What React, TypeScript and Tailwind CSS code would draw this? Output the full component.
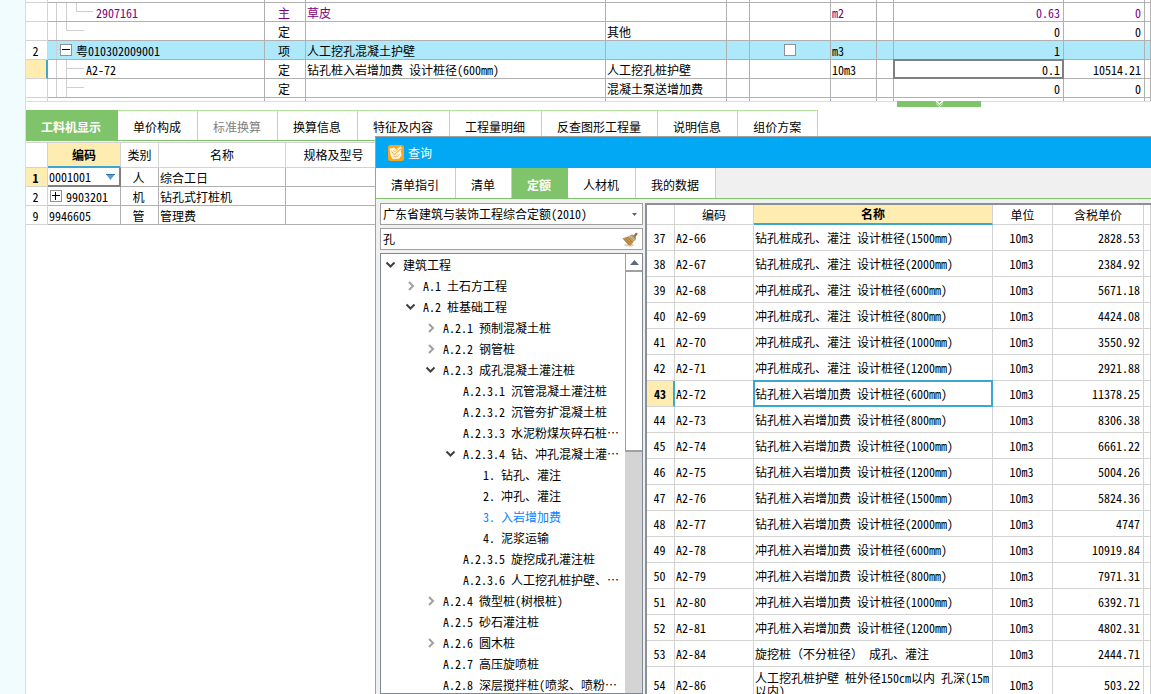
import { useState } from "react";
import { clsx } from "clsx";

type Align = "left" | "center" | "right";

const alignClass: Record<Align, string> = {
  left: "text-left",
  center: "text-center",
  right: "text-right",
};

const bottomTabs = [
  "工料机显示",
  "单价构成",
  "标准换算",
  "换算信息",
  "特征及内容",
  "工程量明细",
  "反查图形工程量",
  "说明信息",
  "组价方案",
];

const queryTabs = ["清单指引", "清单", "定额", "人材机", "我的数据"];

type TreeNode = { level: number; label: string; state?: "open" | "closed" };

const tree: TreeNode[] = [
  { level: 0, label: "建筑工程", state: "open" },
  { level: 1, label: "A.1 土石方工程", state: "closed" },
  { level: 1, label: "A.2 桩基础工程", state: "open" },
  { level: 2, label: "A.2.1 预制混凝土桩", state: "closed" },
  { level: 2, label: "A.2.2 钢管桩", state: "closed" },
  { level: 2, label: "A.2.3 成孔混凝土灌注桩", state: "open" },
  { level: 3, label: "A.2.3.1 沉管混凝土灌注桩" },
  { level: 3, label: "A.2.3.2 沉管夯扩混凝土桩" },
  { level: 3, label: "A.2.3.3 水泥粉煤灰碎石桩…" },
  { level: 3, label: "A.2.3.4 钻、冲孔混凝土灌…", state: "open" },
  { level: 4, label: "1. 钻孔、灌注" },
  { level: 4, label: "2. 冲孔、灌注" },
  { level: 4, label: "3. 入岩增加费" },
  { level: 4, label: "4. 泥浆运输" },
  { level: 3, label: "A.2.3.5 旋挖成孔灌注桩" },
  { level: 3, label: "A.2.3.6 人工挖孔桩护壁、…" },
  { level: 2, label: "A.2.4 微型桩(树根桩)", state: "closed" },
  { level: 2, label: "A.2.5 砂石灌注桩" },
  { level: 2, label: "A.2.6 圆木桩", state: "closed" },
  { level: 2, label: "A.2.7 高压旋喷桩" },
  { level: 2, label: "A.2.8 深层搅拌桩(喷浆、喷粉…" },
];

const indent = ["pl-1", "pl-6", "pl-11", "pl-16", "pl-21"];

const quotas: [number, string, string, string][] = [
  [37, "A2-66", "钻孔桩成孔、灌注 设计桩径(1500mm)", "2828.53"],
  [38, "A2-67", "钻孔桩成孔、灌注 设计桩径(2000mm)", "2384.92"],
  [39, "A2-68", "冲孔桩成孔、灌注 设计桩径(600mm)", "5671.18"],
  [40, "A2-69", "冲孔桩成孔、灌注 设计桩径(800mm)", "4424.08"],
  [41, "A2-70", "冲孔桩成孔、灌注 设计桩径(1000mm)", "3550.92"],
  [42, "A2-71", "冲孔桩成孔、灌注 设计桩径(1200mm)", "2921.88"],
  [43, "A2-72", "钻孔桩入岩增加费 设计桩径(600mm)", "11378.25"],
  [44, "A2-73", "钻孔桩入岩增加费 设计桩径(800mm)", "8306.38"],
  [45, "A2-74", "钻孔桩入岩增加费 设计桩径(1000mm)", "6661.22"],
  [46, "A2-75", "钻孔桩入岩增加费 设计桩径(1200mm)", "5004.26"],
  [47, "A2-76", "钻孔桩入岩增加费 设计桩径(1500mm)", "5824.36"],
  [48, "A2-77", "钻孔桩入岩增加费 设计桩径(2000mm)", "4747"],
  [49, "A2-78", "冲孔桩入岩增加费 设计桩径(600mm)", "10919.84"],
  [50, "A2-79", "冲孔桩入岩增加费 设计桩径(800mm)", "7971.31"],
  [51, "A2-80", "冲孔桩入岩增加费 设计桩径(1000mm)", "6392.71"],
  [52, "A2-81", "冲孔桩入岩增加费 设计桩径(1200mm)", "4802.31"],
  [53, "A2-84", "旋挖桩（不分桩径） 成孔、灌注", "2444.71"],
  [54, "A2-86", "人工挖孔桩护壁 桩外径150cm以内 孔深(15m以内)", "503.22"],
];

function ExpandBox({ open, label }: { open: boolean; label: string }) {
  return (
    <button
      aria-label={label}
      className="flex size-3 shrink-0 items-center justify-center border border-[#909090] bg-white"
    >
      <svg width="8" height="8" viewBox="0 0 8 8" shapeRendering="crispEdges">
        <path d="M0 3h8v1H0z" fill="#000" />
        {!open && <path d="M3 0h1v8H3z" fill="#000" />}
      </svg>
    </button>
  );
}

function BranchLines({ width, d }: { width: number; d: string }) {
  return (
    <svg width={width} height="18" className="block shrink-0" shapeRendering="crispEdges">
      <path d={d} fill="none" stroke="#cfcfcf" />
    </svg>
  );
}

function Cell({
  children,
  align = "left",
  light,
  flush,
  className,
}: {
  children?: React.ReactNode;
  align?: Align;
  light?: boolean;
  flush?: boolean;
  className?: string;
}) {
  return (
    <td
      className={clsx(
        "border-r border-b whitespace-nowrap",
        light ? "border-[#d3d3d3]" : "border-[#b0b0b0]",
        flush ? "p-0" : children ? "pt-0.5 pr-[3px] pb-0 pl-px" : "p-0",
        alignClass[align],
        className
      )}
    >
      {children}
    </td>
  );
}

function BillTable() {
  const row = "h-[19px]";

  return (
    <table className="w-full table-fixed border-separate border-spacing-0">
      <colgroup>
        <col className="w-[22px]" />
        <col className="w-[217px]" />
        <col className="w-[41px]" />
        <col />
        <col className="w-[121px]" />
        <col className="w-[23px]" />
        <col className="w-[81px]" />
        <col className="w-[46px]" />
        <col className="w-[17px]" />
        <col className="w-[170px]" />
        <col className="w-[81px]" />
        <col className="w-[6px]" />
      </colgroup>
      <tbody>
        <tr className="h-[3px]">
          {Array.from({ length: 12 }, (_, i) => (
            <Cell key={i} light={i === 0} />
          ))}
        </tr>
        <tr className={clsx(row, "text-[#800080]")}>
          <Cell light />
          <Cell flush>
            <div className="flex">
              <BranchLines width={48} d="M8.5 0V18M18.5 0V18M28.5 0V8.5H45" />
              <span className="pt-0.5">2907161</span>
            </div>
          </Cell>
          <Cell align="center">主</Cell>
          <Cell>草皮</Cell>
          <Cell />
          <Cell />
          <Cell />
          <Cell>m2</Cell>
          <Cell />
          <Cell align="right">0.63</Cell>
          <Cell align="right">0</Cell>
          <Cell />
        </tr>
        <tr className={row}>
          <Cell light />
          <Cell flush>
            <BranchLines width={48} d="M8.5 0V18M18.5 0V8.5H36" />
          </Cell>
          <Cell align="center">定</Cell>
          <Cell />
          <Cell>其他</Cell>
          <Cell />
          <Cell />
          <Cell />
          <Cell />
          <Cell align="right">0</Cell>
          <Cell align="right">0</Cell>
          <Cell />
        </tr>
        <tr className={clsx(row, "bg-[#ade8fb]")}>
          <Cell light align="center" className="bg-white">
            2
          </Cell>
          <Cell flush>
            <div className="flex items-center">
              <BranchLines width={12} d="M8.5 0V18M8.5 8.5H12" />
              <ExpandBox open label="折叠" />
              <span className="pt-0.5 pl-1">粤010302009001</span>
            </div>
          </Cell>
          <Cell align="center">项</Cell>
          <Cell>人工挖孔混凝土护壁</Cell>
          <Cell />
          <Cell />
          <Cell flush>
            <input
              type="checkbox"
              aria-label="人工挖孔混凝土护壁"
              className="mx-auto block size-3 appearance-none border border-[#909090] bg-white"
            />
          </Cell>
          <Cell>m3</Cell>
          <Cell />
          <Cell align="right">1</Cell>
          <Cell />
          <Cell />
        </tr>
        <tr className={row}>
          <td className="border-r-2 border-b border-r-[#3aa7d1] border-b-[#d3d3d3] bg-[#ffecb0] p-0" />
          <Cell flush>
            <div className="flex">
              <BranchLines width={38} d="M8.5 0V18M18.5 0V18M18.5 8.5H36" />
              <span className="pt-0.5">A2-72</span>
            </div>
          </Cell>
          <Cell align="center">定</Cell>
          <Cell>钻孔桩入岩增加费 设计桩径(600mm)</Cell>
          <Cell>人工挖孔桩护壁</Cell>
          <Cell />
          <Cell />
          <Cell>10m3</Cell>
          <Cell />
          <Cell
            align="right"
            className="relative after:absolute after:-top-px after:-right-px after:-bottom-px after:-left-px after:border-2 after:border-[#808080]"
          >
            0.1
          </Cell>
          <Cell align="right">10514.21</Cell>
          <Cell />
        </tr>
        <tr className={row}>
          <Cell light />
          <Cell flush>
            <BranchLines width={48} d="M8.5 0V18M18.5 0V18M18.5 8.5H36" />
          </Cell>
          <Cell align="center">定</Cell>
          <Cell />
          <Cell>混凝土泵送增加费</Cell>
          <Cell />
          <Cell />
          <Cell />
          <Cell />
          <Cell align="right">0</Cell>
          <Cell align="right">0</Cell>
          <Cell />
        </tr>
        <tr className="h-[3px]">
          {Array.from({ length: 12 }, (_, i) => (
            <Cell key={i} light={i === 0} className="border-b-0" />
          ))}
        </tr>
      </tbody>
    </table>
  );
}

function ResourceTable() {
  const head = "border-r border-b border-[#d3d3d3] p-0 font-normal";

  return (
    <table className="w-[356px] table-fixed border-separate border-spacing-0 border-t border-[#d3d3d3]">
      <colgroup>
        <col className="w-[22px]" />
        <col className="w-[73px]" />
        <col className="w-[38px]" />
        <col className="w-[127px]" />
        <col className="w-[96px]" />
      </colgroup>
      <thead>
        <tr className="h-[25px]">
          <th className={head} />
          <th className="border-r border-b-2 border-r-[#d3d3d3] border-b-[#3aa7d1] bg-[#ffecb0] p-0 font-bold">
            编码
          </th>
          <th className={head}>类别</th>
          <th className={head}>名称</th>
          <th className={head}>规格及型号</th>
        </tr>
      </thead>
      <tbody>
        <tr className="h-[19px]">
          <Cell light align="center" className="bg-[#ffecb0] font-bold">
            1
          </Cell>
          <td className="border-r-2 border-b-2 border-[#808080] p-0">
            <div className="flex items-center">
              <select
                aria-label="编码"
                className="h-[17px] min-w-0 flex-1 appearance-none pt-px pl-px leading-4"
              >
                <option>0001001</option>
              </select>
              <svg width="9" height="6" viewBox="0 0 9 6" className="mr-1">
                <path d="M0 0h9L4.5 6z" fill="#5b9bd0" />
                <path d="M0 0h9v1H0z" fill="#2f6ea5" />
              </svg>
            </div>
          </td>
          <Cell align="center">人</Cell>
          <Cell>综合工日</Cell>
          <Cell />
        </tr>
        <tr className="h-[19px]">
          <Cell light align="center">
            2
          </Cell>
          <Cell flush>
            <div className="flex items-center gap-1 pl-0.5">
              <ExpandBox open={false} label="展开" />
              <span className="pt-0.5">9903201</span>
            </div>
          </Cell>
          <Cell align="center">机</Cell>
          <Cell>钻孔式打桩机</Cell>
          <Cell />
        </tr>
        <tr className="h-[19px]">
          <Cell light align="center">
            9
          </Cell>
          <Cell>9946605</Cell>
          <Cell align="center">管</Cell>
          <Cell>管理费</Cell>
          <Cell />
        </tr>
      </tbody>
    </table>
  );
}

function QuotaTree() {
  const [selected, setSelected] = useState("3. 入岩增加费");

  return (
    <div className="flex min-h-0 flex-1 border border-[#808896] bg-white">
      <ul className="min-w-0 flex-1 overflow-hidden">
        {tree.map((node) => (
          <li key={node.label}>
            <button
              onClick={() => setSelected(node.label)}
              className={clsx(
                "flex h-[21px] w-full items-center whitespace-nowrap",
                indent[node.level],
                selected === node.label && "text-[#0a84ff]"
              )}
            >
              <svg width="18" height="10" viewBox="0 0 18 10" className="shrink-0" fill="none" strokeWidth="2">
                {node.state === "open" && <path d="M1.5 2.5L5.5 6.5L9.5 2.5" stroke="#404040" />}
                {node.state === "closed" && <path d="M4 1L8 5L4 9" stroke="#a0a0a0" />}
              </svg>
              {node.label}
            </button>
          </li>
        ))}
      </ul>
      {/* Scrollbar */}
      <div className="flex w-[17px] flex-col bg-[#d4d4d4]">
        <button
          aria-label="向上滚动"
          className="flex h-[18px] items-center justify-center border-b-2 border-l border-[#a0a0a0] bg-white"
        >
          <svg width="9" height="5" viewBox="0 0 9 5">
            <path d="M0 5h9L4.5 0z" fill="#606880" />
          </svg>
        </button>
        <div className="h-[180px] border-b-2 border-l border-[#a0a0a0] bg-white" />
      </div>
    </div>
  );
}

function QuotaTable() {
  const head = "border-r border-b border-[#d3d3d3] p-0 font-normal";
  const cell = "border-r border-b border-[#d3d3d3] py-0 pr-[3px] pl-px";

  return (
    <div className="min-w-0 flex-1 overflow-hidden border-t-2 border-l-2 border-[#8a8f98] bg-white">
      <table className="w-full table-fixed border-separate border-spacing-0">
        <colgroup>
          <col className="w-[28px]" />
          <col className="w-[79px]" />
          <col />
          <col className="w-[60px]" />
          <col className="w-[91px]" />
          <col className="w-[7px]" />
        </colgroup>
        <thead>
          <tr className="h-5">
            <th className={head} />
            <th className={head}>编码</th>
            <th className="border-r border-b-2 border-r-[#d3d3d3] border-b-[#3aa7d1] bg-[#ffecb0] p-0 font-bold">
              名称
            </th>
            <th className={head}>单位</th>
            <th className={head}>含税单价</th>
            <th className={head} />
          </tr>
        </thead>
        <tbody className="leading-[13px]">
          {quotas.map(([no, code, name, price]) => {
            const active = no === 43;
            return (
              <tr key={no} className={no === 54 ? "h-[35px]" : "h-[26px]"}>
                <td
                  className={clsx(
                    "border-b border-b-[#d3d3d3] py-0 pl-0 text-center",
                    active
                      ? "border-r-2 border-r-[#3aa7d1] bg-[#ffecb0] pr-0 font-bold"
                      : "border-r border-r-[#d3d3d3] pr-0.5"
                  )}
                >
                  {no}
                </td>
                <td className={cell}>{code}</td>
                <td
                  className={clsx(
                    cell,
                    active &&
                      "relative after:absolute after:-top-px after:-right-px after:-bottom-px after:-left-px after:border-2 after:border-[#3aa7d1]"
                  )}
                >
                  {name}
                </td>
                <td className={clsx(cell, "text-center")}>10m3</td>
                <td className={clsx(cell, "text-right")}>{price}</td>
                <td className={cell} />
              </tr>
            );
          })}
        </tbody>
      </table>
    </div>
  );
}

function QueryWindow() {
  const [tab, setTab] = useState("定额");

  return (
    <section className="absolute top-[136px] right-0 bottom-0 left-[375px] flex flex-col border-t border-l border-[#a0a0a0] bg-[#f0f0f0]">
      <header className="flex h-[31px] shrink-0 items-center gap-1 bg-[#02a8f3] pl-3 text-white">
        <svg width="16" height="16" viewBox="0 0 16 16">
          <rect width="16" height="16" rx="2.5" fill="#fba51a" />
          <path
            d="M1.6 3.6L6 2.4l2 2.2 4.4-3.2 2 1.8-1.6 2.4.8 4.6-2.4 3.6-6.4.4-2.2-3.4z"
            fill="#fff3dc"
          />
          <path d="M3.4 6.4l3 3.4L13.8 3" fill="none" stroke="#f3a32a" strokeWidth="1" />
          <path d="M5.2 5.2l1.6 1.6 3-2.4" fill="none" stroke="#f8b84e" strokeWidth=".9" />
          <path d="M5.4 11.4h4.2l2-2.4" fill="none" stroke="#f8b84e" strokeWidth=".9" />
        </svg>
        <h2>查询</h2>
      </header>

      <nav className="flex h-[31px] shrink-0 border-b border-[#7fc36a]">
        {queryTabs.map((name) => (
          <button
            key={name}
            onClick={() => setTab(name)}
            className={clsx(
              "border-r pt-1 pr-4 pl-[15px]",
              tab === name
                ? "border-[#7fc36a] bg-[#7fc36a] font-bold text-white"
                : "border-[#b2e39e] bg-white"
            )}
          >
            {name}
          </button>
        ))}
      </nav>

      <div className="flex min-h-0 flex-1 gap-0.5 pt-1 pl-1">
        <div className="flex w-[263px] shrink-0 flex-col">
          <div className="relative mb-[3px]">
            <select
              aria-label="定额库"
              className="block h-[22px] w-full appearance-none border border-[#a0a0a0] bg-white pl-0.5"
            >
              <option>广东省建筑与装饰工程综合定额(2010)</option>
            </select>
            <svg width="5" height="3" viewBox="0 0 5 3" className="pointer-events-none absolute top-2.5 right-1.5">
              <path d="M0 0h5L2.5 3z" fill="#606060" />
            </svg>
          </div>
          <div className="mb-[3px] flex h-[22px] items-center border border-[#a0a0a0] bg-white pr-1">
            <input aria-label="搜索" defaultValue="孔" className="min-w-0 flex-1 pl-0.5 outline-none" />
            <button aria-label="清空">
              <svg width="16" height="15" viewBox="0 0 16 15">
                <ellipse cx="7" cy="13" rx="5" ry="1.6" fill="#ddd6cf" />
                <path d="M11 4.2L13.6.9c.8-.8 2.4.3 1.7 1.5L13 5.6z" fill="#a5643a" />
                <path d="M.4 6.2L7.4 4l5 4.4L9 13.6c-1 .4-2 .2-3-.8z" fill="#c99a55" />
                <path d="M7.4 3.4l2.8-1 4 3.4-1.2 3.2z" fill="#9c8a68" />
                <path d="M8.4 3.2l4.8 4.4" stroke="#d8d0b8" strokeWidth=".8" />
                <path d="M3.4 6l5.2 6M5.4 5.2l5 5.4M1.6 6.8l5.8 6" stroke="#8a5f28" strokeWidth=".6" />
              </svg>
            </button>
          </div>
          <QuotaTree />
        </div>
        <QuotaTable />
      </div>
    </section>
  );
}

export default function App() {
  const [tab, setTab] = useState("工料机显示");

  return (
    <div className="relative flex h-screen overflow-hidden bg-white font-['Noto_Sans_Mono_CJK_SC','Noto_Sans_CJK_SC',monospace] text-[12px] leading-4 text-black">
      <div className="w-[26px] shrink-0 border-r border-[#d8dede] bg-[#f0fcff]" />
      <main className="min-w-0 flex-1">
        <BillTable />

        {/* Splitter handle */}
        <div className="flex h-[9px] justify-end border-t border-[#dcdcdc] pr-[170px]">
          <button aria-label="收起" className="-mt-px flex h-[6px] w-21 justify-center bg-[#7fc36a]">
            <svg width="9" height="6" viewBox="0 0 9 6" fill="none" stroke="#fff">
              <path d="M1 0l3.5 3L8 0" strokeWidth="1.4" />
              <path d="M1 2.5l3.5 3 3.5-3" strokeOpacity=".7" />
            </svg>
          </button>
        </div>

        <nav className="mb-px flex h-[31px] border-b border-[#7fc36a]">
          {bottomTabs.map((name) => (
            <button
              key={name}
              onClick={() => setTab(name)}
              className={clsx(
                "border-t border-r pt-0.5 pr-4 pl-[15px]",
                tab === name
                  ? "border-[#7fc36a] bg-[#7fc36a] font-bold text-white"
                  : "border-[#b2e39e] bg-white",
                name === "标准换算" && "text-[#808080]"
              )}
            >
              {name}
            </button>
          ))}
        </nav>
        <ResourceTable />
      </main>
      <QueryWindow />
    </div>
  );
}
